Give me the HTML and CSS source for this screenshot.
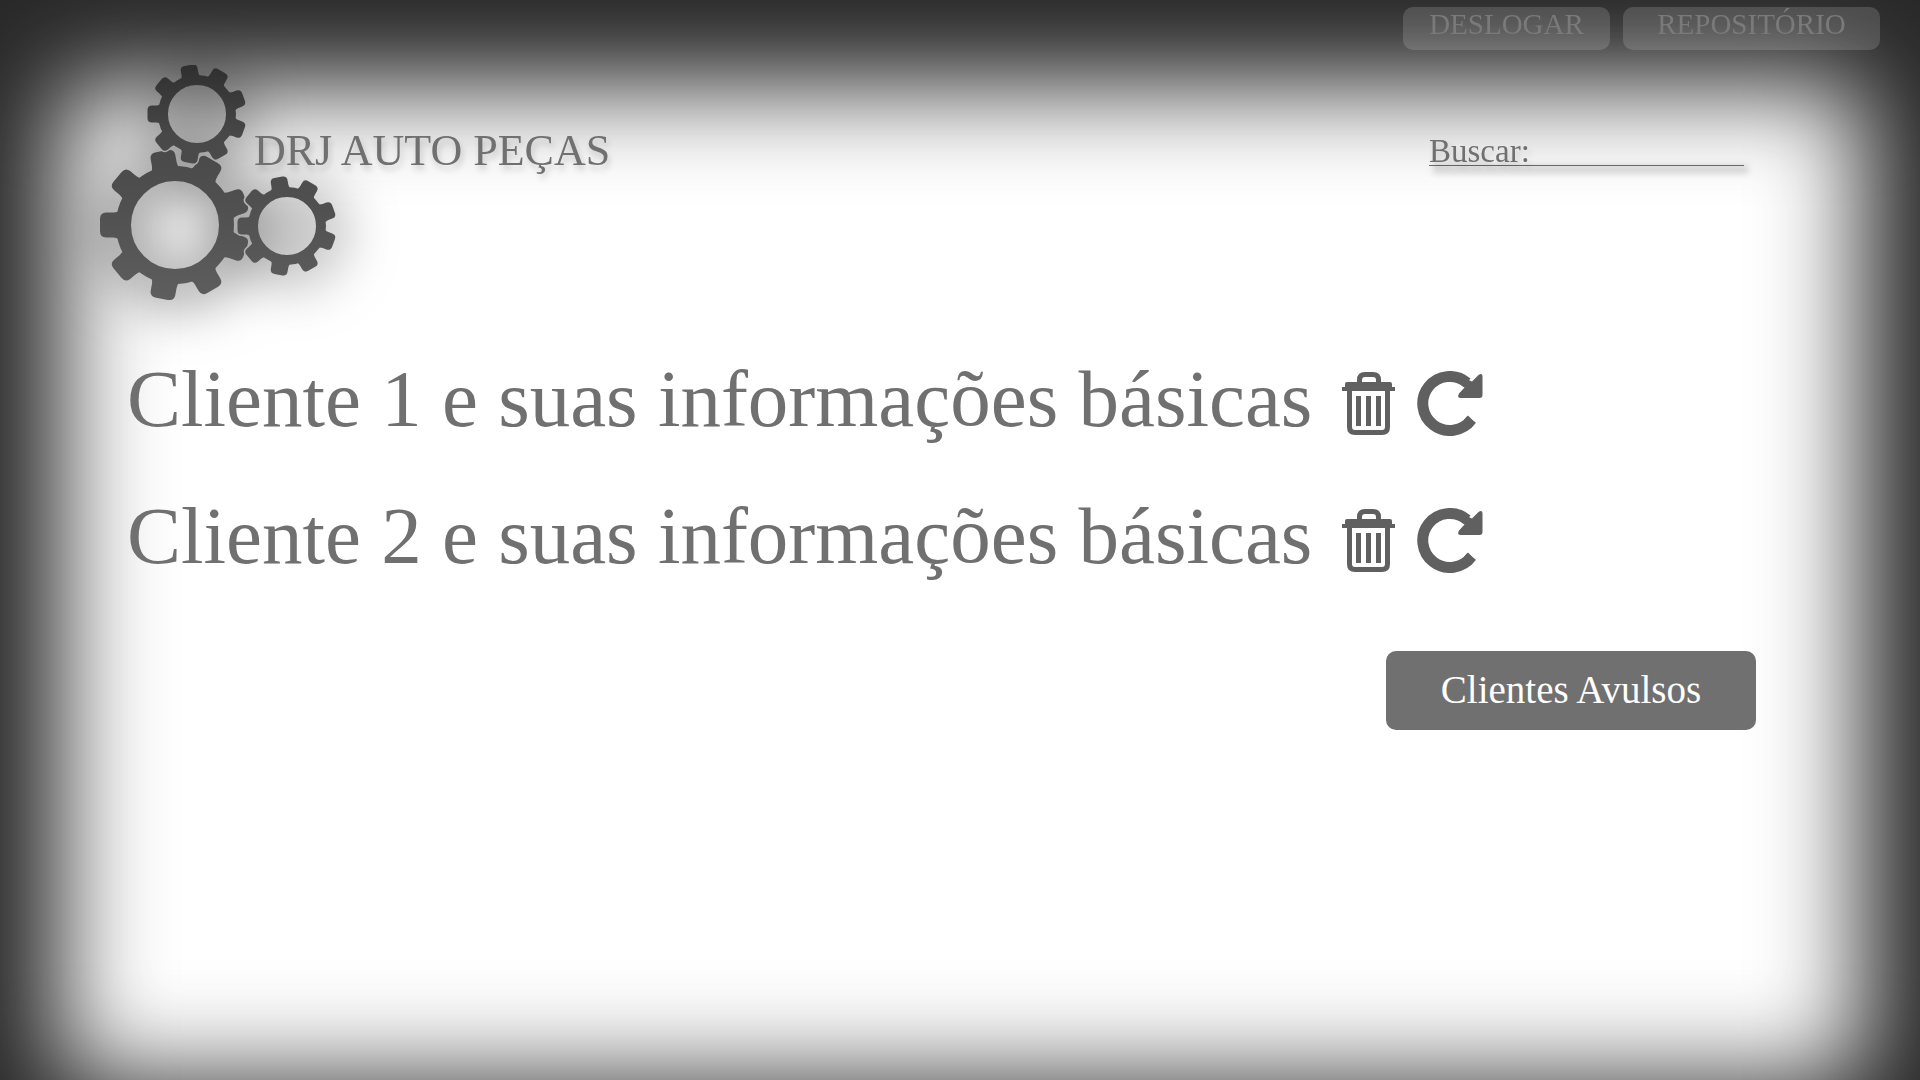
FILE: index.html
```html
<!DOCTYPE html>
<html lang="pt-BR">
<head>
  <meta charset="utf-8">
  <meta name="viewport" content="width=device-width, initial-scale=1">
  <title>DRJ Auto Peças</title>
  <link rel="stylesheet" href="styles.css">
</head>
<body>
  <svg class="sprite" aria-hidden="true">
    <symbol id="trash" viewBox="0 0 53 64">
      <path d="M17.500 13V8Q17.500 2.500 23 2.500H31Q36.500 2.500 36.500 8V13" fill="none" stroke="currentColor" stroke-width="5"/>
      <path d="M5 10H48Q50 10 50 12V15H53V19H0V15H3V12Q3 10 5 10Z" fill="currentColor"/>
      <path d="M7.500 17V55Q7.500 60.500 13 60.500H40Q45.500 60.500 45.500 55V17" fill="none" stroke="currentColor" stroke-width="5"/>
      <path d="M16.500 24V54M26.500 24V54M36.500 24V54" stroke="currentColor" stroke-width="5"/>
    </symbol>
    <symbol id="redo" viewBox="0 0 66 65">
      <path d="M50 11.700A27 27 0 1 0 54.500 48.500" fill="none" stroke="currentColor" stroke-width="11"/>
      <path d="M51 44.500L58.500 52L54 57L47 49Z" fill="currentColor"/>
      <path d="M47.500 7L55 10.500L61.500 4Q65.500 1 65.500 6V24Q65.500 27 62.500 27H44Q39.500 27 42 22.500L47.500 16.500L42 12Z" fill="currentColor"/>
    </symbol>
  </svg>

  <nav class="topbar">
    <button class="tab tab-logout" type="button">DESLOGAR</button>
    <button class="tab tab-repo" type="button">REPOSITÓRIO</button>
  </nav>

  <header class="header">
    <div class="brand">
      <svg class="logo" viewBox="0 0 236 236" aria-hidden="true">
        <defs>
          <linearGradient id="steel" x1="0" y1="0" x2="0" y2="1">
            <stop offset="0" stop-color="#2f2f2f"/>
            <stop offset=".3" stop-color="#484848"/>
            <stop offset=".6" stop-color="#505050"/>
            <stop offset="1" stop-color="#5e5e5e"/>
          </linearGradient>
          <path id="big-tooth" d="M-56-14Q-59-12.500-62-12.500H-69Q-75-12.500-75-6V6Q-75 12.500-69 12.500H-62Q-59 12.500-56 14Z"/>
          <path id="small-tooth" d="M-37-9.500Q-39-8.500-41-8.500H-45Q-49.500-8.500-49.500-4V4Q-49.500 8.500-45 8.500H-41Q-39 8.500-37 9.500Z"/>
          <g id="big-gear">
            <circle r="51.500" fill="none" stroke="#fff" stroke-width="15"/>
            <use href="#big-tooth"/>
            <use href="#big-tooth" transform="rotate(40)"/>
            <use href="#big-tooth" transform="rotate(80)"/>
            <use href="#big-tooth" transform="rotate(120)"/>
            <use href="#big-tooth" transform="rotate(160)"/>
            <use href="#big-tooth" transform="rotate(200)"/>
            <use href="#big-tooth" transform="rotate(240)"/>
            <use href="#big-tooth" transform="rotate(280)"/>
            <use href="#big-tooth" transform="rotate(320)"/>
          </g>
          <g id="small-teeth">
            <use href="#small-tooth"/>
            <use href="#small-tooth" transform="rotate(40)"/>
            <use href="#small-tooth" transform="rotate(80)"/>
            <use href="#small-tooth" transform="rotate(120)"/>
            <use href="#small-tooth" transform="rotate(160)"/>
            <use href="#small-tooth" transform="rotate(200)"/>
            <use href="#small-tooth" transform="rotate(240)"/>
            <use href="#small-tooth" transform="rotate(280)"/>
            <use href="#small-tooth" transform="rotate(320)"/>
          </g>
          <mask id="gears" maskUnits="userSpaceOnUse" x="0" y="0" width="236" height="236">
            <g fill="#fff">
              <use href="#big-gear" x="75" y="160"/>
              <g stroke="#000" stroke-width="3">
                <use href="#small-teeth" x="97" y="49"/>
                <use href="#small-teeth" x="187" y="161"/>
              </g>
              <use href="#small-teeth" x="97" y="49"/>
              <use href="#small-teeth" x="187" y="161"/>
              <g fill="none" stroke="#fff" stroke-width="10">
                <circle cx="97" cy="49" r="34"/>
                <circle cx="187" cy="161" r="34"/>
              </g>
            </g>
          </mask>
        </defs>
        <rect width="236" height="236" fill="url(#steel)" mask="url(#gears)"/>
      </svg>
      <h1 class="title">DRJ AUTO PEÇAS</h1>
    </div>
    <form class="search" role="search">
      <label for="busca">Buscar:</label>
      <input id="busca" type="text">
    </form>
  </header>

  <main class="content">
    <ul class="clients">
      <li class="client">
        <span class="client-name">Cliente 1 e suas informações básicas</span>
        <button class="icon-button" type="button" aria-label="Excluir"><svg class="icon-trash"><use href="#trash"/></svg></button>
        <button class="icon-button" type="button" aria-label="Atualizar"><svg class="icon-redo"><use href="#redo"/></svg></button>
      </li>
      <li class="client">
        <span class="client-name">Cliente 2 e suas informações básicas</span>
        <button class="icon-button" type="button" aria-label="Excluir"><svg class="icon-trash"><use href="#trash"/></svg></button>
        <button class="icon-button" type="button" aria-label="Atualizar"><svg class="icon-redo"><use href="#redo"/></svg></button>
      </li>
    </ul>
    <button class="primary" type="button">Clientes Avulsos</button>
  </main>
</body>
</html>
```
FILE: styles.css
```css
* {
  box-sizing: border-box;
}

body {
  margin: 0;
  min-height: 100vh;
  position: relative;
  overflow-x: hidden;
  background: #292929;
  color: #707070;
  font-family: "Liberation Serif", serif;
}

/* soft white sheet behind the page */
body::before {
  content: "";
  position: fixed;
  inset: 86px 58px 0 62px;
  z-index: -1;
  background: #fff;
  filter: blur(50px);
}

button {
  border: 0;
  padding: 0;
  background: none;
  color: inherit;
  font-family: inherit;
  cursor: pointer;
}

.sprite {
  position: absolute;
  width: 0;
  height: 0;
}

.topbar {
  display: flex;
  justify-content: flex-end;
  gap: 13px;
  padding: 7px 40px 15px;
}

.tab {
  height: 43px;
  padding-bottom: 8px;
  border-radius: 10px;
  background: rgba(255, 255, 255, .15);
  color: #7a7a7a;
  font-size: 29px;
  line-height: 35px;
}

.tab-logout {
  width: 207px;
}

.tab-repo {
  width: 257px;
}

.header {
  display: flex;
  justify-content: space-between;
  align-items: flex-start;
  padding: 0 176px 0 100px;
}

.brand {
  display: grid;
}

.logo {
  grid-area: 1 / 1;
  width: 236px;
  height: 236px;
  filter: drop-shadow(3px 5px 28px rgba(0, 0, 0, .65));
}

.title {
  grid-area: 1 / 1;
  position: relative;
  margin: 60px 0 0 154px;
  font-size: 44px;
  font-weight: 400;
  line-height: 52px;
  white-space: nowrap;
  text-shadow: 2px 5px 6px rgba(0, 0, 0, .16);
}

.search {
  position: relative;
  display: flex;
  width: 315px;
  margin-top: 72px;
  border-bottom: 1px solid #707070;
  font-size: 33px;
  line-height: 28px;
  text-shadow: 3px 5px 6px rgba(0, 0, 0, .16);
}

/* soft shadow under the search line */
.search::after {
  content: "";
  position: absolute;
  inset: 100% -4px -9px 4px;
  background: rgba(0, 0, 0, .13);
  filter: blur(3px);
}

.search input {
  flex: 1;
  min-width: 0;
  height: 28px;
  padding: 0 6px;
  border: 0;
  outline: 0;
  background: none;
  color: inherit;
  font: inherit;
}

.content {
  display: flex;
  flex-direction: column;
  padding: 70px 164px 60px 127px;
}

.clients {
  display: flex;
  flex-direction: column;
  gap: 72px;
  margin: 0;
  padding: 0;
  list-style: none;
}

.client {
  display: flex;
  align-items: flex-start;
  gap: 22px;
}

.client-name {
  margin-right: 8px;
  font-size: 81px;
  line-height: 56px;
}

.icon-button {
  display: flex;
  align-items: flex-end;
  height: 65px;
  color: #606060;
}

.icon-trash {
  width: 53px;
  height: 64px;
}

.icon-redo {
  width: 66px;
  height: 65px;
}

.primary {
  align-self: flex-end;
  width: 370px;
  height: 79px;
  margin-top: 78px;
  padding-bottom: 2px;
  border-radius: 10px;
  background: #707070;
  color: #fff;
  font-size: 39px;
}
```
